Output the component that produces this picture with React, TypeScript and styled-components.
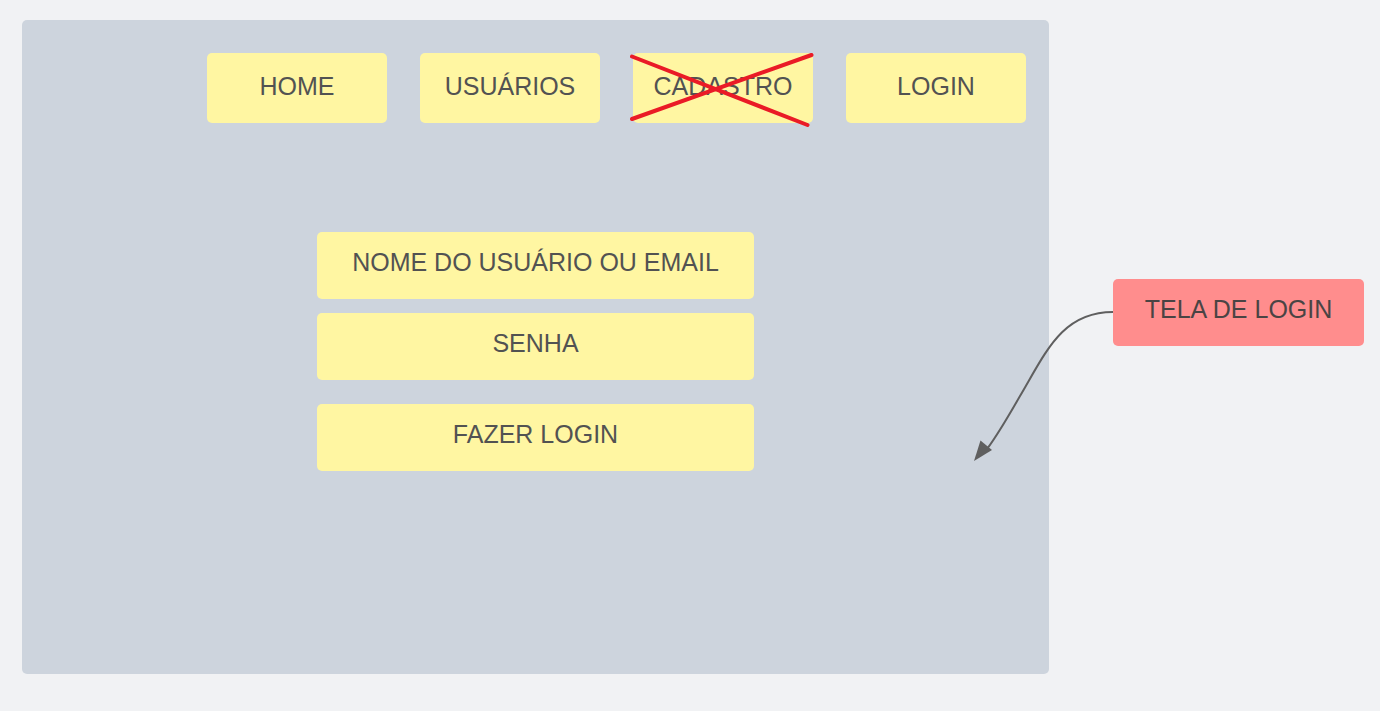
import React from "react";
import styled, { createGlobalStyle } from "styled-components";

const GlobalStyle = createGlobalStyle`
  html, body {
    margin: 0;
    padding: 0;
    background: #f1f2f4;
    font-family: "Liberation Sans", Arial, sans-serif;
  }
  * { box-sizing: border-box; }
`;

const Canvas = styled.div`
  position: relative;
  width: 1380px;
  height: 711px;
  padding: 20px 0 0 22px;
  display: flex;
  align-items: flex-start;
  overflow: hidden;
`;

const Panel = styled.div`
  width: 1027px;
  height: 654px;
  background: #cdd4dd;
  border-radius: 5px;
  padding: 33px 23px 0 0;
  display: flex;
  flex-direction: column;
`;

const Nav = styled.nav`
  display: flex;
  justify-content: flex-end;
  gap: 33px;
`;

const Sticky = styled.div<{ $w: number; $h: number; $bg?: string }>`
  position: relative;
  width: ${(p) => p.$w}px;
  height: ${(p) => p.$h}px;
  background: ${(p) => p.$bg ?? "#fff6a2"};
  border-radius: 5px;
  display: flex;
  align-items: center;
  justify-content: center;
  font-size: 25px;
  line-height: 29px;
  color: #525252;
  white-space: nowrap;
`;

const NavButton = styled(Sticky)`
  padding-bottom: 4px;
`;

const Form = styled.div`
  margin: 109px 0 0 295px;
  display: flex;
  flex-direction: column;
`;

const Field = styled(Sticky)<{ $mt: number }>`
  margin-top: ${(p) => p.$mt}px;
  padding-bottom: 6px;
`;

const Note = styled(Sticky)`
  margin: 259px 0 0 64px;
  padding-bottom: 7px;
  color: #4a4444;
`;

const Cross = styled.svg`
  position: absolute;
  left: 0;
  top: 0;
  overflow: visible;
  pointer-events: none;
`;

const Connector = styled.svg`
  position: absolute;
  left: 0;
  top: 0;
  pointer-events: none;
`;

export default function App() {
  return (
    <>
      <GlobalStyle />
      <Canvas>
        <Panel>
          <Nav>
            <NavButton $w={180} $h={70}>HOME</NavButton>
            <NavButton $w={180} $h={70}>USUÁRIOS</NavButton>
            <NavButton $w={180} $h={70}>
              CADASTRO
              <Cross width={180} height={70}>
                <line x1={-1} y1={3.5} x2={174.5} y2={72} stroke="#ea1b26" strokeWidth={4} strokeLinecap="round" />
                <line x1={-1} y1={66} x2={178.5} y2={2} stroke="#ea1b26" strokeWidth={4} strokeLinecap="round" />
              </Cross>
            </NavButton>
            <NavButton $w={180} $h={70}>LOGIN</NavButton>
          </Nav>
          <Form>
            <Field $w={437} $h={67} $mt={0}>NOME DO USUÁRIO OU EMAIL</Field>
            <Field $w={437} $h={67} $mt={14}>SENHA</Field>
            <Field $w={437} $h={67} $mt={24}>FAZER LOGIN</Field>
          </Form>
        </Panel>
        <Note $w={251} $h={67} $bg="#ff8d8d">TELA DE LOGIN</Note>
        <Connector width={1380} height={711}>
          <path
            d="M1113 312 C1062 312 1046 352 1020 396 C1008 417 996 437 987 449"
            fill="none"
            stroke="#5f5f5f"
            strokeWidth={2}
          />
          <polygon points="974,461 980.5,440.5 992,450" fill="#5f5f5f" />
        </Connector>
      </Canvas>
    </>
  );
}
